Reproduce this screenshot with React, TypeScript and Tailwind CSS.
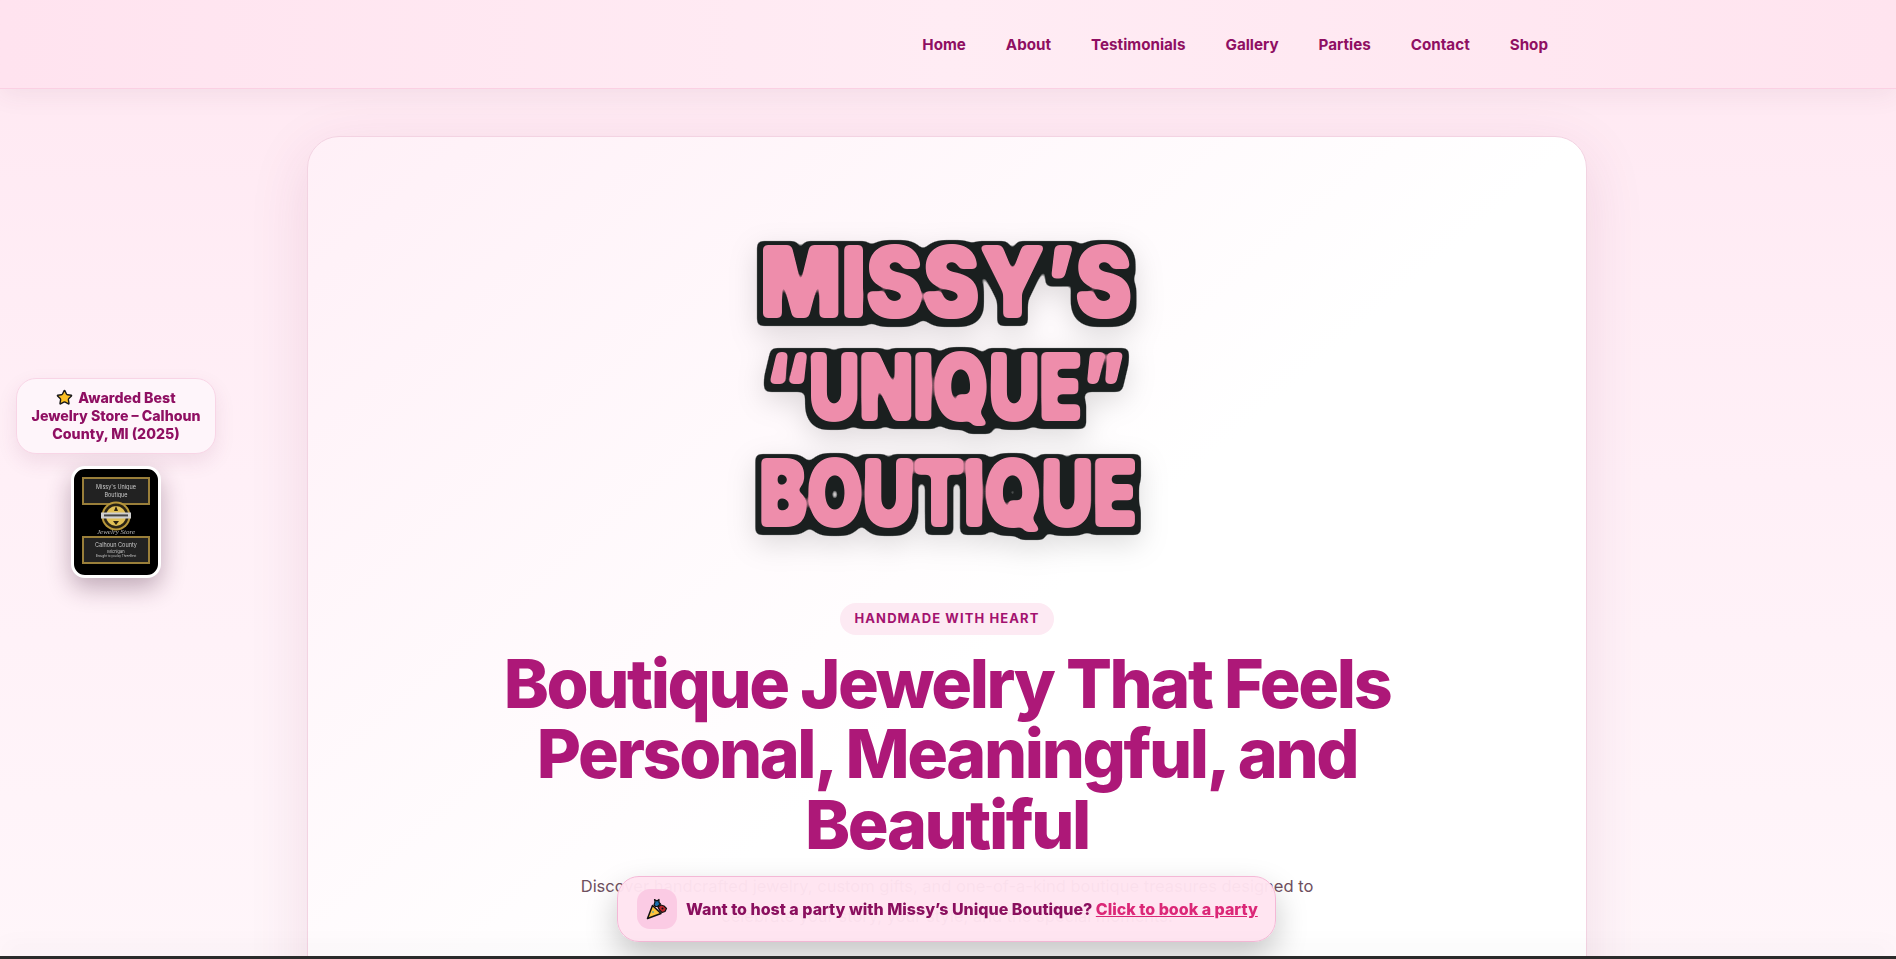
import { Star } from "lucide-react";

const navLinks = ["Home", "About", "Testimonials", "Gallery", "Parties", "Contact", "Shop"];

function Logo() {
  return (
    <svg width="460" height="350" viewBox="-3 0 460 350" className="block overflow-visible">
      <defs>
        <filter id="sticker" filterUnits="userSpaceOnUse" x="-60" y="-60" width="580" height="470" colorInterpolationFilters="sRGB">
          {/* fat pink letters with the corners rounded off */}
          <feMorphology in="SourceAlpha" operator="dilate" radius="1.4" result="fatA" />
          <feGaussianBlur in="fatA" stdDeviation="2.4" result="fatB" />
          <feComponentTransfer in="fatB" result="fatC">
            <feFuncA type="linear" slope="7" intercept="-3" />
          </feComponentTransfer>
          <feFlood floodColor="#ee8dab" />
          <feComposite in2="fatC" operator="in" result="pink" />
          {/* dark rounded outline */}
          <feMorphology in="SourceAlpha" operator="dilate" radius="7" result="outA" />
          <feGaussianBlur in="outA" stdDeviation="3.2" result="outB" />
          <feComponentTransfer in="outB" result="outC">
            <feFuncA type="linear" slope="7" intercept="-3" />
          </feComponentTransfer>
          <feOffset in="outC" dx="-0.5" dy="1.5" result="outD" />
          <feFlood floodColor="#1a1f1f" />
          <feComposite in2="outD" operator="in" result="dark" />
          {/* soft shadow */}
          <feGaussianBlur in="outD" stdDeviation="14" result="shA" />
          <feOffset in="shA" dy="9" result="shB" />
          <feFlood floodColor="#000000" floodOpacity="0.13" />
          <feComposite in2="shB" operator="in" result="shadow" />
          <feMerge>
            <feMergeNode in="shadow" />
            <feMergeNode in="dark" />
            <feMergeNode in="pink" />
          </feMerge>
        </filter>
      </defs>
      <g filter="url(#sticker)" fontFamily="Inter, sans-serif" fontWeight="900" fill="#ee8dab">
        <text x="40" y="107" fontSize="97" textLength="372" lengthAdjust="spacingAndGlyphs">MISSY’S</text>
        <text x="45" y="210" fontSize="92" textLength="360" lengthAdjust="spacingAndGlyphs">“UNIQUE”</text>
        <text x="39" y="316" fontSize="92" textLength="378" lengthAdjust="spacingAndGlyphs">BOUTIQUE</text>
      </g>
    </svg>
  );
}

function Seal() {
  return (
    <svg width="30" height="30" viewBox="0 0 30 30" className="block">
      <circle cx="15" cy="15" r="14.5" fill="#b8973a" />
      <circle cx="15" cy="15" r="12.5" fill="#2a2315" />
      <circle cx="15" cy="15" r="10" fill="#e0bf55" />
      <rect x="0" y="11.5" width="30" height="6" fill="#cfcfcf" />
      <rect x="3" y="13.4" width="24" height="2" fill="#444444" />
      <path d="M13 10l2-5 2 5zM12 20h6l-3 4z" fill="#2a2110" />
    </svg>
  );
}

function Plaque() {
  return (
    <div className="w-[90px] h-[112px] rounded-[14px] border-[3px] border-white bg-black shadow-[0_10px_24px_rgba(60,20,50,0.32)] overflow-hidden">
      <div className="h-full flex flex-col items-center pt-2 blur-[0.4px]">
        <div className="w-[68px] h-[28px] border-2 border-[#9a7f3a] bg-[#222222] flex flex-col items-center justify-center text-[5.5px] leading-[8px] text-[#c8c8c8]">
          <span>Missy's Unique</span>
          <span>Boutique</span>
        </div>
        <div className="-mt-1 z-10">
          <Seal />
        </div>
        <div className="-mt-[2px] text-[7px] leading-[6px] text-[#bbbbbb] italic [font-family:'Liberation_Serif',serif]">Jewelry Store</div>
        <div className="mt-[1px] w-[68px] h-[28px] border-2 border-[#9a7f3a] bg-[#222222] flex flex-col items-center justify-center text-[5.5px] leading-[7px] text-[#c8c8c8]">
          <span>Calhoun County</span>
          <span className="text-[4px] leading-[5px]">Michigan</span>
          <span className="text-[3px] leading-[4px]">Brought to you by ThreeBest</span>
        </div>
      </div>
    </div>
  );
}

function PartyIcon() {
  return (
    <svg width="24" height="24" viewBox="0 0 24 24" className="block">
      <path d="M2.5 21.5 7.5 8.5 16 16.5Z" fill="#fcc33c" stroke="#111111" strokeWidth="1.5" strokeLinejoin="round" />
      <circle cx="8" cy="15" r="0.8" fill="#17a2c8" />
      <path d="M9 8 10 5 9.5 2.5 12 4 14 2.5 14 5.5 15.5 7 12.5 9.5 10.5 9.5Z" fill="#1a6fb0" stroke="#111111" strokeWidth="1.2" strokeLinejoin="round" />
      <path d="M13 10 16 8 19 9 21.5 11.5 20 14.5 17 15.5 14.5 13Z" fill="#c0272d" stroke="#111111" strokeWidth="1.2" strokeLinejoin="round" />
      <circle cx="17.5" cy="11.5" r="1" fill="#111111" />
    </svg>
  );
}

export default function App() {
  return (
    <div className="h-screen flex flex-col overflow-hidden bg-gradient-to-b from-[#ffe8f2] via-[#fff0f7] to-[#fff6fa] [font-family:Inter,sans-serif]">
      {/* ── Header ── */}
      <header className="shrink-0 h-[89px] z-20 border-b border-[#fbd0e3] bg-gradient-to-r from-[#ffe3ef] via-[#ffecf4] to-[#ffe4ef] shadow-[0_6px_24px_rgba(90,50,70,0.07)]">
        <div className="max-w-[1200px] mx-auto h-full pt-[2px] flex items-center justify-end gap-10">
          {navLinks.map((link) => (
            <a key={link} href="#" className="text-[15.2px] font-bold text-[#8f0f62]">
              {link}
            </a>
          ))}
        </div>
      </header>

      {/* ── Hero card ── */}
      <main className="flex-1 min-h-0 overflow-hidden pt-[47px] pr-[2px] flex justify-center">
        <section className="w-[1280px] h-[1100px] shrink-0 rounded-[32px] border border-[#f3d3e2] bg-gradient-to-br from-[#fff0f7] via-white to-white shadow-[0_16px_60px_rgba(130,40,90,0.12)] pt-[73px] flex flex-col items-center text-center">
          <Logo />
          <span className="mt-[43px] h-8 px-[14px] rounded-full bg-[#fdeaf3] flex items-center text-[13px] font-bold tracking-[0.085em] text-[#a3126f]">
            HANDMADE WITH HEART
          </span>
          <h1 className="mt-[13px] max-w-[950px] text-[68px] leading-[70.4px] font-extrabold tracking-[-0.035em] text-[#ad1878]">
            Boutique Jewelry That Feels Personal, Meaningful, and Beautiful
          </h1>
          <p className="mt-[12px] max-w-[760px] text-[16.5px] leading-[30px] text-[#6f5060]">
            Discover handcrafted jewelry, custom gifts, and one-of-a-kind boutique treasures designed to celebrate your story, your style, and the special moments.
          </p>
        </section>
      </main>

      {/* window edge */}
      <div className="shrink-0 h-[3px] z-10 bg-[#2b2b2b] shadow-[0_-6px_24px_rgba(0,0,0,0.14)]" />

      {/* ── Award badge ── */}
      <aside className="fixed left-4 top-[378px] w-[200px] flex flex-col items-center gap-3">
        <div className="w-full h-[76px] rounded-[20px] border border-[#f8d5e6] bg-[#fef5fa] shadow-[0_8px_20px_rgba(120,40,90,0.1)] flex items-center justify-center text-center text-[14.2px] leading-[18px] font-extrabold text-[#8f0f62]">
          <p>
            <Star size={17} strokeWidth={2} className="inline-block align-[-3px] mr-[5px] fill-[#fbbf24] text-[#1a1a1a]" />
            Awarded Best
            <br />
            Jewelry Store – Calhoun
            <br />
            County, MI (2025)
          </p>
        </div>
        <Plaque />
      </aside>

      {/* ── Party bar ── */}
      <div className="fixed left-[617px] top-[876px] w-[659px] h-[66px] rounded-[22px] border border-[#f4b8d6] bg-[#ffe4f1]/[0.97] shadow-[0_14px_32px_rgba(0,0,0,0.22)] flex items-center pl-[19px] gap-[9px] text-[16px] font-extrabold text-[#8a0f5e]">
        <span className="w-10 h-10 rounded-[13px] bg-[#fbcbe4] flex items-center justify-center">
          <PartyIcon />
        </span>
        <span className="whitespace-nowrap">
          Want to host a party with Missy’s Unique Boutique?{" "}
          <a href="#" className="underline text-[#db2777]">Click to book a party</a>
        </span>
      </div>
    </div>
  );
}
